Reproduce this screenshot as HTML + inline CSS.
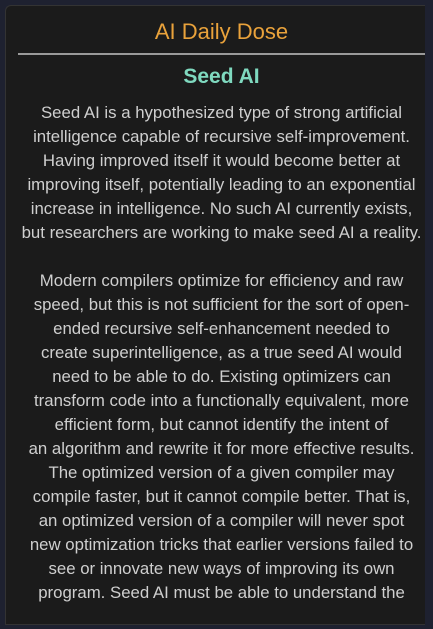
<!DOCTYPE html>
<html><head><style>
html,body{margin:0;padding:0;background:#1e2130;width:433px;height:604px;overflow:hidden}
.card{position:absolute;left:5px;top:5px;width:420px;height:620px;background:#1b1b1b;border:1px solid #333;border-right:none;border-radius:6px 0 0 0;box-sizing:border-box;font-family:"Liberation Sans",sans-serif}
h1{margin:0;position:absolute;left:12px;right:0;top:12px;text-align:center;font-weight:normal;font-size:22px;color:#e9a23b;line-height:28px}
hr{position:absolute;left:12px;right:0;top:47px;margin:0;border:0;height:2px;background:#9a9a9a}
h2{margin:0;position:absolute;left:12px;right:0;top:57px;text-align:center;font-size:21px;color:#7fd9bf;line-height:28px}
.t{position:absolute;left:12px;right:0;top:95px;text-align:center;color:#cfcfcf;font-size:16.8px;line-height:24px}
p{margin:0 0 24px}
</style></head><body><div class="card">
<h1>AI Daily Dose</h1><hr><h2>Seed AI</h2>
<div class="t">
<p>Seed AI is a hypothesized type of strong artificial<br>intelligence capable of recursive self-improvement.<br>Having improved itself it would become better at<br>improving itself, potentially leading to an exponential<br>increase in intelligence. No such AI currently exists,<br>but researchers are working to make seed AI a reality.</p>
<p>Modern compilers optimize for efficiency and raw<br>speed, but this is not sufficient for the sort of open-<br>ended recursive self-enhancement needed to<br>create superintelligence, as a true seed AI would<br>need to be able to do. Existing optimizers can<br>transform code into a functionally equivalent, more<br>efficient form, but cannot identify the intent of<br>an algorithm and rewrite it for more effective results.<br>The optimized version of a given compiler may<br>compile faster, but it cannot compile better. That is,<br>an optimized version of a compiler will never spot<br>new optimization tricks that earlier versions failed to<br>see or innovate new ways of improving its own<br>program. Seed AI must be able to understand the</p>
</div></div></body></html>
